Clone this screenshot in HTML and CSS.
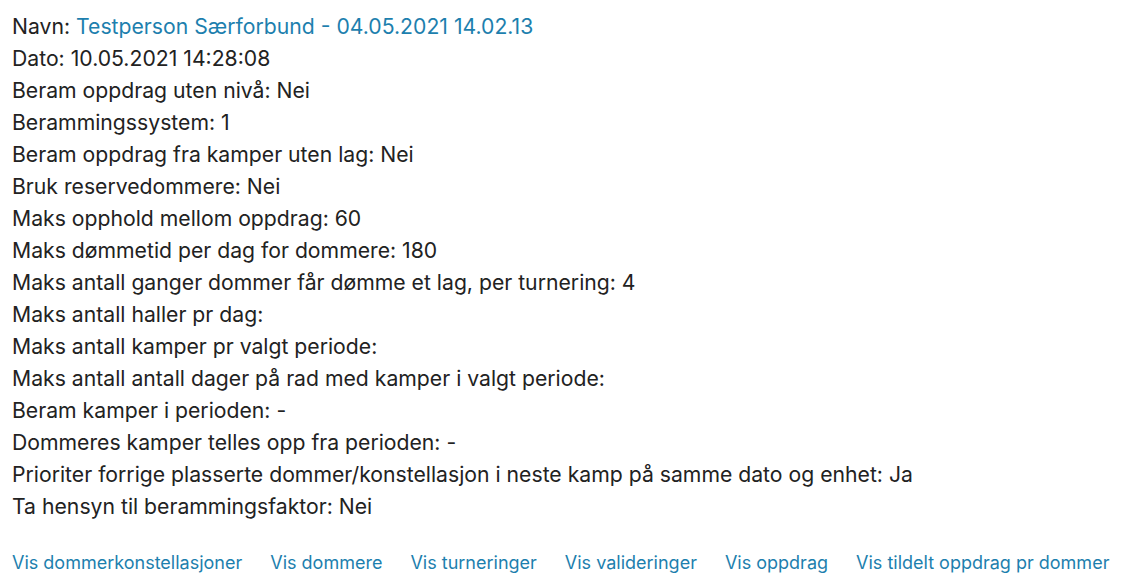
FILE: index.html
```html
<!DOCTYPE html>
<html lang="no">
<head>
    <meta charset="UTF-8">
    <meta name="viewport" content="width=device-width, initial-scale=1.0">
    <title>Beramming</title>
    <link rel="stylesheet" href="styles.css">
</head>
<body>
    <div class="details">
        <div class="row">Navn: <a href="#">Testperson Særforbund - 04.05.2021 14.02.13</a></div>
        <div class="row">Dato: 10.05.2021 14:28:08</div>
        <div class="row">Beram oppdrag uten nivå: Nei</div>
        <div class="row">Berammingssystem: 1</div>
        <div class="row">Beram oppdrag fra kamper uten lag: Nei</div>
        <div class="row">Bruk reservedommere: Nei</div>
        <div class="row">Maks opphold mellom oppdrag: 60</div>
        <div class="row">Maks dømmetid per dag for dommere: 180</div>
        <div class="row">Maks antall ganger dommer får dømme et lag, per turnering: 4</div>
        <div class="row">Maks antall haller pr dag:</div>
        <div class="row">Maks antall kamper pr valgt periode:</div>
        <div class="row">Maks antall antall dager på rad med kamper i valgt periode:</div>
        <div class="row">Beram kamper i perioden: -</div>
        <div class="row">Dommeres kamper telles opp fra perioden: -</div>
        <div class="row">Prioriter forrige plasserte dommer/konstellasjon i neste kamp på samme dato og enhet: Ja</div>
        <div class="row">Ta hensyn til berammingsfaktor: Nei</div>
    </div>
    <nav class="actions">
        <a href="#">Vis dommerkonstellasjoner</a>
        <a href="#">Vis dommere</a>
        <a href="#">Vis turneringer</a>
        <a href="#">Vis valideringer</a>
        <a href="#">Vis oppdrag</a>
        <a href="#">Vis tildelt oppdrag pr dommer</a>
    </nav>
</body>
</html>
```

FILE: styles.css
```css
body {
    font-family: Inter, 'Liberation Sans', Arial, sans-serif;
    margin: 0;
    padding: 10px 12px 0 12px;
    color: #222;
    background: #fff;
}

a {
    color: #1d7fae;
    text-decoration: none;
}

.details {
    font-size: 21.2px;
    line-height: 32px;
}

.actions {
    display: flex;
    gap: 28px;
    margin-top: 25px;
    font-size: 18px;
    line-height: 32px;
}
```
